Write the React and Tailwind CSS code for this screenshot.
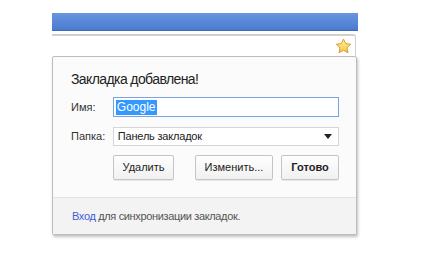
import React from "react";

function Star() {
  return (
    <svg width="17" height="16" viewBox="0 0 24 23">
      <defs>
        <linearGradient id="st" x1="0" y1="0" x2="0" y2="1">
          <stop offset="0" stopColor="#fff3a0" />
          <stop offset="1" stopColor="#f5c842" />
        </linearGradient>
      </defs>
      <path
        d="M12 1.5l3.1 6.6 7.2.9-5.3 5 1.4 7.1L12 17.6l-6.4 3.5L7 14 1.7 9l7.2-.9z"
        fill="url(#st)"
        stroke="#d9962e"
        strokeWidth="1.4"
        strokeLinejoin="round"
      />
    </svg>
  );
}

function Btn({ children, bold }) {
  return (
    <button
      className={
        "h-[25px] rounded-[2px] border border-[#c4c4c4] bg-gradient-to-b from-[#fefefe] to-[#f1f1f1] shadow-[0_1px_0_rgba(0,0,0,0.08)] text-[11px] text-[#222] " +
        (bold ? "font-bold" : "")
      }
    >
      {children}
    </button>
  );
}

export default function App() {
  return (
    <div
      className="w-[434px] h-[255px] bg-white pl-[52px] pt-[13px]"
      style={{ fontFamily: '"Liberation Sans", Arial, sans-serif' }}
    >
      <div className="w-[306px] h-[18px] bg-gradient-to-b from-[#6995e0] to-[#4a7bd0] border-b border-[#3d69bb]" />
      <div className="mt-[3px] w-[304px] h-[22px] border-t-2 border-r border-[#d0d0d0] rounded-tr-[3px] flex items-center justify-end pr-[3px]">
        <Star />
      </div>
      <div className="w-[305px] h-[179px] border border-[#bdbdbd] rounded-[2px] bg-[#fbfbfb] shadow-[1px_2px_3px_rgba(0,0,0,0.25)] flex flex-col">
        <div className="flex-1 pl-[18px] pr-[17px] pt-[12px]">
          <div className="text-[14px] tracking-[-0.6px] leading-[20px] text-[#222]">
            Закладка добавлена!
          </div>
          <div className="mt-[8px] flex items-center">
            <span className="w-[42px] text-[11px] text-[#333]">Имя:</span>
            <div className="w-[227px] h-[20px] border border-[#7aa3e6] bg-white flex items-center px-[2px]">
              <span className="bg-[#3399ff] text-white text-[12px] leading-[15px] px-[1px]">
                Google
              </span>
            </div>
          </div>
          <div className="mt-[10px] flex items-center">
            <span className="w-[42px] text-[11px] text-[#333]">Папка:</span>
            <div className="w-[227px] h-[19px] border border-[#d6d6d6] bg-white flex items-center justify-between pl-[4px] pr-[6px]">
              <span className="text-[11px] tracking-[-0.2px] text-[#222]">Панель закладок</span>
              <svg width="8" height="5" viewBox="0 0 8 5">
                <path d="M0 0h8L4 5z" fill="#222" />
              </svg>
            </div>
          </div>
          <div className="mt-[9px] ml-[42px] flex gap-[21px] w-[226px]">
            <div className="w-[61px] flex flex-col"><Btn>Удалить</Btn></div>
            <div className="flex gap-[8px]">
              <div className="w-[78px] flex flex-col"><Btn>Изменить...</Btn></div>
              <div className="w-[58px] flex flex-col"><Btn bold>Готово</Btn></div>
            </div>
          </div>
        </div>
        <div className="h-[37px] border-t border-[#e3e3e3] bg-[#f3f3f3] flex items-center pl-[19px] text-[11px] tracking-[-0.35px] text-[#555]">
          <span className="text-[#3e5ed6]">Вход</span>
          <span>&nbsp;для синхронизации закладок.</span>
        </div>
      </div>
    </div>
  );
}
